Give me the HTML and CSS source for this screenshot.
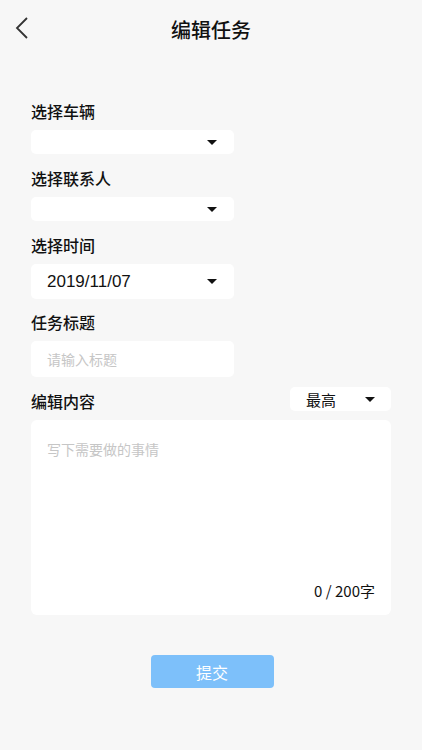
FILE: index.html
```html
<!DOCTYPE html>
<html lang="zh-CN">
<head>
    <meta charset="UTF-8">
    <meta name="viewport" content="width=device-width, initial-scale=1.0">
    <title>编辑任务</title>
    <link rel="stylesheet" href="styles.css">
</head>
<body>
    <div class="header">
        <a class="back" href="#">
            <svg width="16" height="24" viewBox="0 0 16 24"><path d="M13 2 L3 12 L13 22" fill="none" stroke="#333" stroke-width="1.8"/></svg>
        </a>
        <h1>编辑任务</h1>
    </div>

    <div class="form">
        <div class="label">选择车辆</div>
        <div class="select small"><span></span><i class="arrow"></i></div>

        <div class="label">选择联系人</div>
        <div class="select small"><span></span><i class="arrow"></i></div>

        <div class="label">选择时间</div>
        <div class="select big"><span>2019/11/07</span><i class="arrow"></i></div>

        <div class="label">任务标题</div>
        <div class="input">请输入标题</div>

        <div class="row">
            <div class="label">编辑内容</div>
            <div class="level"><span>最高</span><i class="arrow"></i></div>
        </div>
        <div class="content">
            <div class="placeholder">写下需要做的事情</div>
            <div class="count">0 / 200字</div>
        </div>

        <button class="submit">提交</button>
    </div>
</body>
</html>
```

FILE: styles.css
```css
body {
    margin: 0;
    background: #f7f7f7;
    font-family: "Noto Sans CJK SC", "Liberation Sans", sans-serif;
    color: #111;
}
.header {
    height: 58px;
    display: flex;
    align-items: center;
    justify-content: center;
    position: relative;
}
.back {
    position: absolute;
    left: 14px;
    top: 16px;
}
.header h1 {
    margin: 0;
    font-size: 20px;
    font-weight: 500;
}
.form {
    padding: 43px 31px 0 31px;
}
.label {
    font-size: 16px;
    line-height: 20px;
    font-weight: 500;
    margin-bottom: 9px;
}
.select {
    width: 203px;
    box-sizing: border-box;
    background: white;
    border-radius: 5px;
    display: flex;
    align-items: center;
    justify-content: space-between;
    padding: 0 16px;
    font-family: "Liberation Sans", "Noto Sans CJK SC", sans-serif;
    font-size: 17px;
}
.select.small {
    height: 24px;
    margin-bottom: 14px;
}
.select.big {
    height: 35px;
    margin-bottom: 13px;
}
.arrow {
    width: 0;
    height: 0;
    border-left: 5px solid transparent;
    border-right: 5px solid transparent;
    border-top: 5px solid #111;
    margin-right: 1px;
}
.input {
    width: 203px;
    height: 36px;
    box-sizing: border-box;
    background: white;
    border-radius: 5px;
    padding: 0 16px;
    display: flex;
    align-items: center;
    font-size: 14px;
    color: #c6c6c6;
    margin-bottom: 10px;
}
.row {
    display: flex;
    justify-content: space-between;
    align-items: flex-end;
}
.row .label {
    margin-bottom: 9px;
}
.level {
    width: 101px;
    height: 24px;
    box-sizing: border-box;
    background: white;
    border-radius: 5px;
    display: flex;
    align-items: center;
    justify-content: space-between;
    padding: 0 15px 0 16px;
    font-size: 15px;
    margin-bottom: 9px;
}
.content {
    height: 195px;
    background: white;
    border-radius: 6px;
    padding: 0 16px;
    display: flex;
    flex-direction: column;
    justify-content: space-between;
}
.placeholder {
    margin-top: 19px;
    font-size: 14px;
    color: #c6c6c6;
}
.count {
    text-align: right;
    font-size: 15px;
    margin-bottom: 14px;
}
.submit {
    display: block;
    margin: 40px auto 0 auto;
    width: 123px;
    height: 33px;
    border: none;
    border-radius: 4px;
    background: #7dc0fa;
    color: white;
    font-family: "Noto Sans CJK SC", sans-serif;
    font-size: 16px;
    position: relative;
    left: 1px;
}
```
